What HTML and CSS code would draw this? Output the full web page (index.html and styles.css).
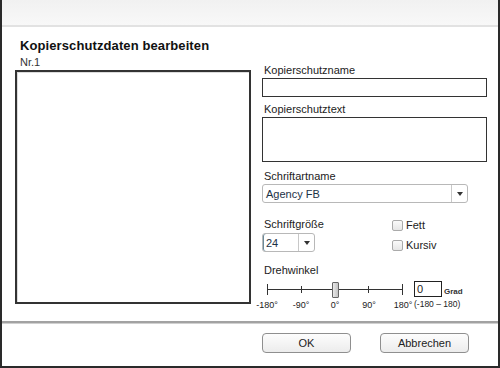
FILE: index.html
```html
<!DOCTYPE html>
<html lang="de">
<head>
    <meta charset="UTF-8">
    <title>Kopierschutzdaten bearbeiten</title>
    <link rel="stylesheet" href="styles.css">
</head>
<body>
    <div class="dialog">
        <div class="title-bar"></div>
        <div class="dialog-body">
            <h1 class="dialog-title">Kopierschutzdaten bearbeiten</h1>
            <div class="columns">
                <div class="preview-col">
                    <div class="preview-label">Nr.1</div>
                    <div class="preview-box"></div>
                </div>
                <div class="form-col">
                    <label class="field-label first">Kopierschutzname</label>
                    <div class="text-input"></div>

                    <label class="field-label">Kopierschutztext</label>
                    <div class="text-area"></div>

                    <label class="field-label font-label">Schriftartname</label>
                    <div class="select wide">
                        <span class="select-value">Agency FB</span>
                        <span class="select-arrow"></span>
                    </div>

                    <div class="style-row">
                        <div class="size-group">
                            <label class="field-label tight">Schriftgröße</label>
                            <div class="select small">
                                <span class="select-value">24</span>
                                <span class="select-arrow"></span>
                            </div>
                        </div>
                        <div class="check-group">
                            <div class="check"><span class="check-box"></span>Fett</div>
                            <div class="check"><span class="check-box"></span>Kursiv</div>
                        </div>
                    </div>

                    <label class="field-label angle-label">Drehwinkel</label>
                    <div class="angle-row">
                        <div class="slider">
                            <div class="slider-track">
                                <span class="tick end"></span>
                                <span class="tick"></span>
                                <span class="tick"></span>
                                <span class="tick"></span>
                                <span class="tick end"></span>
                            </div>
                            <span class="slider-thumb" style="left: 84px"></span>
                            <div class="slider-scale">
                                <span>-180°</span>
                                <span>-90°</span>
                                <span>0°</span>
                                <span>90°</span>
                                <span>180°</span>
                            </div>
                        </div>
                        <div class="angle-input">
                            <div class="angle-line">
                                <div class="angle-box">0</div>
                                <span class="angle-unit">Grad</span>
                            </div>
                            <div class="angle-range">(-180 – 180)</div>
                        </div>
                    </div>
                </div>
            </div>
        </div>
        <div class="separator"></div>
        <div class="button-row">
            <button class="btn btn-ok">OK</button>
            <button class="btn btn-cancel">Abbrechen</button>
        </div>
    </div>
</body>
</html>
```

FILE: styles.css
```css
html,
body {
    margin: 0;
    padding: 0;
    background: #ffffff;
}

body {
    font-family: 'Liberation Sans', Arial, sans-serif;
    font-size: 11px;
    color: #222;
}

.dialog {
    width: 500px;
    height: 368px;
    box-sizing: border-box;
    border: 2px solid #2a2a2a;
    border-top: none;
    display: flex;
    flex-direction: column;
    background: #fff;
}

.title-bar {
    height: 25px;
    background: linear-gradient(180deg, #f1f1f1, #f8f8f8);
    border-bottom: 2px solid #e2e2e2;
    flex-shrink: 0;
}

.dialog-body {
    padding: 11px 0 0 13px;
    height: 266px;
    box-sizing: border-box;
}

.dialog-title {
    margin: 0 0 0 5px;
    font-size: 13px;
    line-height: 16px;
    font-weight: bold;
    color: #111;
    letter-spacing: 0.1px;
}

.columns {
    display: flex;
    gap: 11px;
}

.preview-col {
    width: 236px;
}

.preview-label {
    margin-left: 5px;
    line-height: 16px;
    height: 16px;
    color: #333;
}

.preview-box {
    height: 234px;
    box-sizing: border-box;
    border: 2px solid #333;
    box-shadow: inset 1px 1px 0 #dcdcdc;
}

.form-col {
    width: 225px;
    display: flex;
    flex-direction: column;
}

.field-label {
    display: block;
    margin: 5px 0 0 2px;
    line-height: 15px;
    color: #222;
}

.field-label.first {
    margin-top: 9px;
}

.field-label.font-label {
    margin-top: 7px;
}

.field-label.tight {
    margin-top: 0;
}

.text-input {
    height: 19px;
    box-sizing: border-box;
    border: 1px solid #333;
}

.text-area {
    height: 45px;
    box-sizing: border-box;
    border: 1px solid #333;
}

.select {
    height: 19px;
    box-sizing: border-box;
    border: 1px solid #b8b8b8;
    border-radius: 3px;
    display: flex;
    align-items: center;
    background: #fff;
}

.select.wide {
    width: 206px;
}

.select.small {
    width: 53px;
    margin-top: 1px;
    box-shadow: inset 1px 0 0 #6a8a9a;
}

.select-value {
    flex: 1;
    padding-left: 3px;
    color: #1c3246;
}

.select-arrow {
    width: 15px;
    height: 100%;
    border-left: 1px solid #c8c8c8;
    display: flex;
    align-items: center;
    justify-content: center;
}

.select-arrow::after {
    content: "";
    border-left: 3px solid transparent;
    border-right: 3px solid transparent;
    border-top: 4px solid #333;
}

.style-row {
    display: flex;
    margin-top: 14px;
}

.size-group {
    width: 130px;
}

.check-group {
    display: flex;
    flex-direction: column;
    gap: 5px;
    margin-top: 1px;
}

.check {
    display: flex;
    align-items: center;
    gap: 3px;
    line-height: 15px;
}

.check-box {
    width: 9px;
    height: 9px;
    border: 1px solid #aaa;
    border-radius: 2px;
    background: linear-gradient(180deg, #fafafa, #e6e6e6);
}

.angle-label {
    margin-top: 10px;
}

.angle-row {
    display: flex;
    margin-top: 3px;
    margin-left: -11px;
}

.slider {
    position: relative;
    width: 160px;
    padding: 0 8px 0 16px;
    box-sizing: border-box;
}

.slider-track {
    height: 17px;
    display: flex;
    justify-content: space-between;
    align-items: center;
    background: linear-gradient(#333, #333) center / 100% 1px no-repeat;
}

.tick {
    width: 1px;
    height: 7px;
    background: #333;
}

.tick.end {
    height: 11px;
}

.slider-thumb {
    position: absolute;
    top: 1px;
    width: 5px;
    height: 14px;
    margin-left: -3px;
    border: 1px solid #666;
    border-radius: 1px;
    background: linear-gradient(90deg, #e8e8e8, #c4c4c4);
}

.slider-scale {
    display: grid;
    grid-template-columns: repeat(5, 34px);
    margin: 1px -25px 0 -17px;
    font-size: 9px;
    line-height: 12px;
    text-align: center;
    color: #1a1a1a;
}

.angle-input {
    margin-left: 3px;
}

.angle-line {
    display: flex;
    align-items: flex-end;
    gap: 2px;
}

.angle-box {
    width: 28px;
    height: 16px;
    box-sizing: border-box;
    border: 1px solid #222;
    padding-left: 2px;
    line-height: 14px;
    font-size: 11px;
}

.angle-unit {
    font-size: 8px;
    font-weight: bold;
    line-height: 10px;
    color: #333;
}

.angle-range {
    margin-top: 2px;
    font-size: 8.5px;
    line-height: 11px;
    color: #222;
}

.separator {
    margin-top: 28px;
    height: 2px;
    background: #a2a2a2;
    border-bottom: 1px solid #d0d0d0;
}

.button-row {
    display: flex;
    padding: 9px 0 0 260px;
    gap: 29px;
}

.btn {
    height: 20px;
    border: 1px solid #8f8f8f;
    border-radius: 4px;
    background: linear-gradient(180deg, #fdfdfd, #ececec);
    font-family: 'Liberation Sans', Arial, sans-serif;
    font-size: 11px;
    color: #222;
    padding: 0;
}

.btn-ok {
    width: 89px;
}

.btn-cancel {
    width: 89px;
}
```
